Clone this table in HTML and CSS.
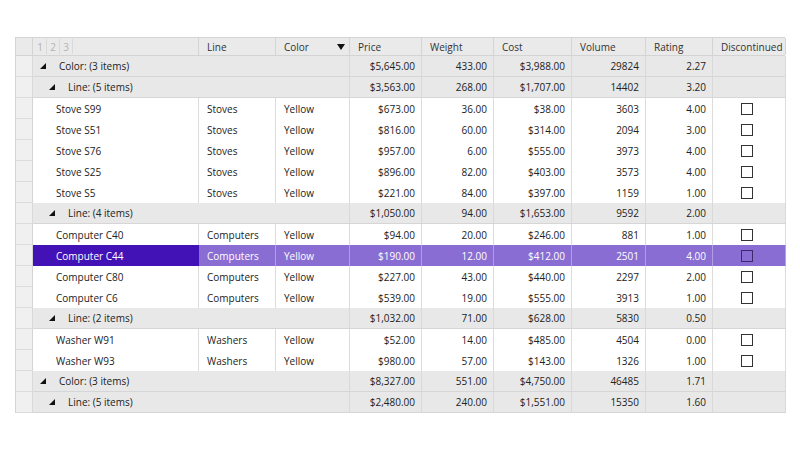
FILE: index.html
```html
<!DOCTYPE html>
<html>
<head>
<meta charset="utf-8">
<link rel="stylesheet" href="styles.css">
</head>
<body>
<div class="grid">
  <div class="row head">
    <div class="c ind"></div>
    <div class="c name"><span class="lvl">1</span><span class="lvl">2</span><span class="lvl">3</span></div>
    <div class="c">Line</div>
    <div class="c color">Color<svg class="sort" width="8" height="6" viewBox="0 0 8 6"><polygon points="0,0 8,0 4,6" fill="#111"/></svg></div>
    <div class="c">Price</div>
    <div class="c">Weight</div>
    <div class="c">Cost</div>
    <div class="c">Volume</div>
    <div class="c">Rating</div>
    <div class="c">Discontinued</div>
  </div>

  <div class="row group">
    <div class="c ind"></div>
    <div class="c gname l1"><svg class="tri" width="6" height="6" viewBox="0 0 6 6"><polygon points="6,0 6,6 0,6" fill="#111"/></svg>Color: (3 items)</div>
    <div class="c num">$5,645.00</div><div class="c num">433.00</div><div class="c num">$3,988.00</div><div class="c num">29824</div><div class="c num">2.27</div><div class="c"></div>
  </div>
  <div class="row group">
    <div class="c ind"></div>
    <div class="c gname l2"><svg class="tri" width="6" height="6" viewBox="0 0 6 6"><polygon points="6,0 6,6 0,6" fill="#111"/></svg>Line: (5 items)</div>
    <div class="c num">$3,563.00</div><div class="c num">268.00</div><div class="c num">$1,707.00</div><div class="c num">14402</div><div class="c num">3.20</div><div class="c"></div>
  </div>

  <div class="row"><div class="c ind"></div><div class="c name">Stove S99</div><div class="c">Stoves</div><div class="c">Yellow</div><div class="c num">$673.00</div><div class="c num">36.00</div><div class="c num">$38.00</div><div class="c num">3603</div><div class="c num">4.00</div><div class="c chk"><span class="box"></span></div></div>
  <div class="row"><div class="c ind"></div><div class="c name">Stove S51</div><div class="c">Stoves</div><div class="c">Yellow</div><div class="c num">$816.00</div><div class="c num">60.00</div><div class="c num">$314.00</div><div class="c num">2094</div><div class="c num">3.00</div><div class="c chk"><span class="box"></span></div></div>
  <div class="row"><div class="c ind"></div><div class="c name">Stove S76</div><div class="c">Stoves</div><div class="c">Yellow</div><div class="c num">$957.00</div><div class="c num">6.00</div><div class="c num">$555.00</div><div class="c num">3973</div><div class="c num">4.00</div><div class="c chk"><span class="box"></span></div></div>
  <div class="row"><div class="c ind"></div><div class="c name">Stove S25</div><div class="c">Stoves</div><div class="c">Yellow</div><div class="c num">$896.00</div><div class="c num">82.00</div><div class="c num">$403.00</div><div class="c num">3573</div><div class="c num">4.00</div><div class="c chk"><span class="box"></span></div></div>
  <div class="row"><div class="c ind"></div><div class="c name">Stove S5</div><div class="c">Stoves</div><div class="c">Yellow</div><div class="c num">$221.00</div><div class="c num">84.00</div><div class="c num">$397.00</div><div class="c num">1159</div><div class="c num">1.00</div><div class="c chk"><span class="box"></span></div></div>

  <div class="row group">
    <div class="c ind"></div>
    <div class="c gname l2"><svg class="tri" width="6" height="6" viewBox="0 0 6 6"><polygon points="6,0 6,6 0,6" fill="#111"/></svg>Line: (4 items)</div>
    <div class="c num">$1,050.00</div><div class="c num">94.00</div><div class="c num">$1,653.00</div><div class="c num">9592</div><div class="c num">2.00</div><div class="c"></div>
  </div>

  <div class="row"><div class="c ind"></div><div class="c name">Computer C40</div><div class="c">Computers</div><div class="c">Yellow</div><div class="c num">$94.00</div><div class="c num">20.00</div><div class="c num">$246.00</div><div class="c num">881</div><div class="c num">1.00</div><div class="c chk"><span class="box"></span></div></div>
  <div class="row sel"><div class="c ind"></div><div class="c name">Computer C44</div><div class="c">Computers</div><div class="c">Yellow</div><div class="c num">$190.00</div><div class="c num">12.00</div><div class="c num">$412.00</div><div class="c num">2501</div><div class="c num">4.00</div><div class="c chk"><span class="box"></span></div></div>
  <div class="row"><div class="c ind"></div><div class="c name">Computer C80</div><div class="c">Computers</div><div class="c">Yellow</div><div class="c num">$227.00</div><div class="c num">43.00</div><div class="c num">$440.00</div><div class="c num">2297</div><div class="c num">2.00</div><div class="c chk"><span class="box"></span></div></div>
  <div class="row"><div class="c ind"></div><div class="c name">Computer C6</div><div class="c">Computers</div><div class="c">Yellow</div><div class="c num">$539.00</div><div class="c num">19.00</div><div class="c num">$555.00</div><div class="c num">3913</div><div class="c num">1.00</div><div class="c chk"><span class="box"></span></div></div>

  <div class="row group">
    <div class="c ind"></div>
    <div class="c gname l2"><svg class="tri" width="6" height="6" viewBox="0 0 6 6"><polygon points="6,0 6,6 0,6" fill="#111"/></svg>Line: (2 items)</div>
    <div class="c num">$1,032.00</div><div class="c num">71.00</div><div class="c num">$628.00</div><div class="c num">5830</div><div class="c num">0.50</div><div class="c"></div>
  </div>

  <div class="row"><div class="c ind"></div><div class="c name">Washer W91</div><div class="c">Washers</div><div class="c">Yellow</div><div class="c num">$52.00</div><div class="c num">14.00</div><div class="c num">$485.00</div><div class="c num">4504</div><div class="c num">0.00</div><div class="c chk"><span class="box"></span></div></div>
  <div class="row"><div class="c ind"></div><div class="c name">Washer W93</div><div class="c">Washers</div><div class="c">Yellow</div><div class="c num">$980.00</div><div class="c num">57.00</div><div class="c num">$143.00</div><div class="c num">1326</div><div class="c num">1.00</div><div class="c chk"><span class="box"></span></div></div>

  <div class="row group">
    <div class="c ind"></div>
    <div class="c gname l1"><svg class="tri" width="6" height="6" viewBox="0 0 6 6"><polygon points="6,0 6,6 0,6" fill="#111"/></svg>Color: (3 items)</div>
    <div class="c num">$8,327.00</div><div class="c num">551.00</div><div class="c num">$4,750.00</div><div class="c num">46485</div><div class="c num">1.71</div><div class="c"></div>
  </div>
  <div class="row group">
    <div class="c ind"></div>
    <div class="c gname l2"><svg class="tri" width="6" height="6" viewBox="0 0 6 6"><polygon points="6,0 6,6 0,6" fill="#111"/></svg>Line: (5 items)</div>
    <div class="c num">$2,480.00</div><div class="c num">240.00</div><div class="c num">$1,551.00</div><div class="c num">15350</div><div class="c num">1.60</div><div class="c"></div>
  </div>
</div>
</body>
</html>
```

FILE: styles.css
```css
* { box-sizing: border-box; }
body {
  margin: 0;
  background: #fff;
  font-family: "Open Sans", "Noto Sans", sans-serif;
  font-size: 10px;
  color: #222;
}
.grid {
  margin: 37px 0 0 15px;
  width: 770px;
  border-left: 1px solid #d4d4d4;
  border-top: 1px solid #d4d4d4;
  display: flex;
  flex-direction: column;
}
.row {
  display: grid;
  grid-template-columns: 17px 166px 77px 74px 72px 72px 78px 74px 67px 73px;
  height: 21px;
}
.c {
  border-right: 1px solid #dcdcdc;
  display: flex;
  align-items: center;
  padding: 0 6px 0 8px;
  white-space: nowrap;
  overflow: hidden;
}
.num { justify-content: flex-end; }
.ind {
  background: #f0f0f0;
  border-bottom: 1px solid #dcdcdc;
  border-right-color: #d4d4d4;
  padding: 0;
}
.head {
  height: 18px;
  background: #eaeaea;
  border-bottom: 1px solid #d4d4d4;
  color: #333;
}
.head .c { border-right-color: #d4d4d4; }
.head .ind { border-bottom: none; background: #eaeaea; }
.head .name { padding: 0 0 0 1px; align-items: stretch; }
.lvl {
  width: 13px;
  border-right: 1px solid #dadada;
  color: #b3b3b3;
  font-size: 10px;
  display: flex;
  align-items: center;
  justify-content: center;
  margin: 1px 0;
}
.color { justify-content: space-between; padding-right: 4px; }
.sort { margin-top: 1px; }
.name { padding-left: 23px; }
.group { background: #e8e8e8; }
.group .c { border-bottom: 1px solid #d6d6d6; border-right-color: #d9d9d9; }
.group .ind { background: #f0f0f0; border-bottom-color: #dcdcdc; }
.gname { grid-column: span 3; padding-left: 0; }
.gname.l1 { padding-left: 7px; }
.gname.l2 { padding-left: 16px; }
.tri { margin-right: 13px; margin-top: -1px; flex: none; }
.chk { justify-content: center; padding: 0 4px 0 0; }
.box {
  width: 12px;
  height: 12px;
  border: 1.5px solid #333;
  background: #fff;
}
.sel .c {
  background: #8a6dd2;
  color: #fff;
  border-right-color: #b19ee4;
}
.sel .name { background: #4312b6; border-right-color: #4312b6; }
.sel .ind { background: #f0f0f0; color: #222; border-right-color: #d4d4d4; }
.sel .box { background: transparent; border-color: #3d2a6e; }
```
